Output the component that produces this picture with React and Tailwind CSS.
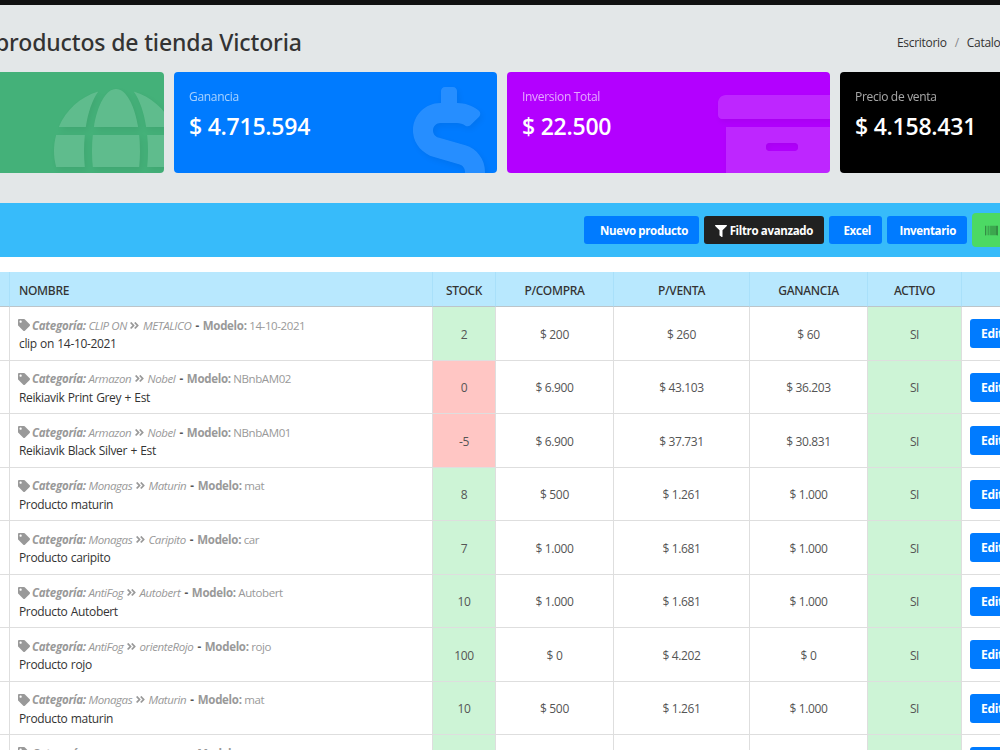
import React from "react";
import {
  FaAngleDoubleRight,
  FaArchive,
  FaBarcode,
  FaDollarSign,
  FaFilter,
  FaGlobe,
  FaTag,
} from "react-icons/fa";

const products = [
  { category: "CLIP ON", sub: "METALICO", model: "14-10-2021", name: "clip on 14-10-2021", stock: 2, cost: "200", price: "260", profit: "60" },
  { category: "Armazon", sub: "Nobel", model: "NBnbAM02", name: "Reikiavik Print Grey + Est", stock: 0, cost: "6.900", price: "43.103", profit: "36.203" },
  { category: "Armazon", sub: "Nobel", model: "NBnbAM01", name: "Reikiavik Black Silver + Est", stock: -5, cost: "6.900", price: "37.731", profit: "30.831" },
  { category: "Monagas", sub: "Maturin", model: "mat", name: "Producto maturin", stock: 8, cost: "500", price: "1.261", profit: "1.000" },
  { category: "Monagas", sub: "Caripito", model: "car", name: "Producto caripito", stock: 7, cost: "1.000", price: "1.681", profit: "1.000" },
  { category: "AntiFog", sub: "Autobert", model: "Autobert", name: "Producto Autobert", stock: 10, cost: "1.000", price: "1.681", profit: "1.000" },
  { category: "AntiFog", sub: "orienteRojo", model: "rojo", name: "Producto rojo", stock: 100, cost: "0", price: "4.202", profit: "0" },
  { category: "Monagas", sub: "Maturin", model: "mat", name: "Producto maturin", stock: 10, cost: "500", price: "1.261", profit: "1.000" },
  { category: "Monagas", sub: "Caripito", model: "car", name: "Producto caripito", stock: 10, cost: "1.000", price: "1.681", profit: "1.000" },
];

const StatCard = ({ color, label, value, icon: Icon }) => (
  <div className={`relative h-[101px] w-[323px] shrink-0 overflow-hidden rounded ${color} px-[15px] pt-[17px] text-white`}>
    <div className="h-4 text-[12px] leading-4 tracking-[-0.3px] opacity-65">{label}</div>
    <div className="mt-[5px] h-8 text-[23px] font-semibold leading-8 tracking-[-0.25px]">{value}</div>
    {Icon && (
      <div className="absolute -right-4 top-[15px] flex w-32 justify-center">
        <Icon className="h-32 w-auto text-white opacity-15 drop-shadow-[2px_3px_3px_rgba(0,0,0,0.4)]" />
      </div>
    )}
  </div>
);

const ToolbarButton = ({ className, children }) => (
  <button className={`flex h-7 shrink-0 items-center justify-end gap-[3px] whitespace-nowrap rounded-[3px] pr-[11px] pt-px text-[11.5px] font-bold tracking-[-0.35px] text-white ${className}`}>
    {children}
  </button>
);

const cell = "border-b border-r border-[#dedede] text-center text-[12px] tracking-[-0.35px] text-[#555] align-middle p-0 pt-[3px]";

const ProductRow = ({ product }) => (
  <tr className="h-[53.5px]">
    <td className={cell} />
    <td className="border-b border-r border-[#dedede] p-0 pl-2 pt-[3px] align-middle">
      <div className="flex h-[18px] items-center whitespace-pre text-[11.5px] tracking-[-0.4px] text-[#999]">
        <FaTag className="mr-0.5 size-[12px]" />
        <b className="italic tracking-[-0.25px]">Categoría:</b>
        <i> {product.category} </i>
        <FaAngleDoubleRight className="size-[11px]" />
        <i> {product.sub}</i>
        <b className="mx-[1.5px] text-[#555]"> - </b>
        <b className="tracking-[-0.3px]">Modelo:</b>
        <span> {product.model}</span>
      </div>
      <div className="h-[19px] pl-px pt-px text-[12px] leading-[18px] tracking-[-0.35px] [word-spacing:0.6px] text-[#333]">{product.name}</div>
    </td>
    <td className={`${cell} ${product.stock > 0 ? "bg-[#cdf4d6]" : "bg-[#ffc6c4]"}`}>{product.stock}</td>
    <td className={cell}>$ {product.cost}</td>
    <td className={cell}>$ {product.price}</td>
    <td className={cell}>$ {product.profit}</td>
    <td className={`${cell} bg-[#cdf4d6]`}>SI</td>
    <td className="border-b border-[#dedede] p-0 pl-2 pt-px align-middle">
      <button className="flex h-[29px] w-[60px] items-center rounded-[3px] bg-[#007bff] pl-[11px] pt-px text-[12px] font-bold tracking-[-0.3px] text-white">
        Editar
      </button>
    </td>
  </tr>
);

const App = () => {
  const th = "border-b border-r border-b-[#bcc5ca] border-r-[#a9e0fa] p-0 pt-[3px] text-center font-['Noto_Sans'] text-[12px] font-medium tracking-[-0.3px] text-[#333]";

  return (
    <div className="h-[750px] w-[1000px] overflow-hidden bg-white font-['Open_Sans','Noto_Sans',sans-serif]">
      <div className="h-[5px] bg-[#111]" />
      <header className="h-[198px] bg-[#e3e7e8] pt-[18px]">
        <div className="flex h-10 items-center justify-between">
          <h1 className="-ml-[5px] -mt-px whitespace-nowrap font-['Noto_Sans'] text-[23px] font-medium tracking-[-0.14px] text-[#333]">
            productos de tienda Victoria
          </h1>
          <nav className="-mt-px flex w-[103px] gap-2 overflow-hidden whitespace-nowrap text-[12px] tracking-[-0.3px] text-[#333]">
            <span>Escritorio</span>
            <span className="text-[#888]">/</span>
            <span>Catalogo</span>
          </nav>
        </div>
        <div className="-ml-[159px] mt-[9px] flex w-[1400px] gap-2.5">
          <StatCard color="bg-[#44b179]" label="" value="" icon={FaGlobe} />
          <StatCard color="bg-[#007bff]" label="Ganancia" value="$ 4.715.594" icon={FaDollarSign} />
          <StatCard color="bg-[#b300ff]" label="Inversion Total" value="$ 22.500" icon={FaArchive} />
          <StatCard color="bg-black" label="Precio de venta" value="$ 4.158.431" />
        </div>
      </header>

      <div className="flex h-[54px] items-center gap-[5px] bg-[#37bbfa] pl-[584px]">
        <ToolbarButton className="w-[115px] bg-[#007bff]">Nuevo producto</ToolbarButton>
        <ToolbarButton className="w-[120px] bg-[#212121]">
          <FaFilter className="size-[12px]" />
          Filtro avanzado
        </ToolbarButton>
        <ToolbarButton className="w-[53px] bg-[#007bff]">Excel</ToolbarButton>
        <ToolbarButton className="w-20 bg-[#007bff]">Inventario</ToolbarButton>
        <button className="flex h-[34px] w-12 shrink-0 items-center rounded bg-[#4cd964] pl-[13px] text-[#2a6d36]">
          <FaBarcode className="size-[13px]" />
        </button>
      </div>

      <table className="mt-[15px] w-[1050px] table-fixed border-separate border-spacing-0">
        <colgroup>
          <col className="w-[10px]" />
          <col className="w-[423px]" />
          <col className="w-[63px]" />
          <col className="w-[118px]" />
          <col className="w-[136px]" />
          <col className="w-[118px]" />
          <col className="w-[94px]" />
          <col className="w-[88px]" />
        </colgroup>
        <thead>
          <tr className="h-[35px] bg-[#b8e8fe]">
            <th className={th} />
            <th className={`${th} pl-[9px] text-left`}>NOMBRE</th>
            <th className={th}>STOCK</th>
            <th className={th}>P/COMPRA</th>
            <th className={th}>P/VENTA</th>
            <th className={th}>GANANCIA</th>
            <th className={th}>ACTIVO</th>
            <th className={th} />
          </tr>
        </thead>
        <tbody>
          {products.map((product, index) => (
            <ProductRow key={index} product={product} />
          ))}
        </tbody>
      </table>
    </div>
  );
};

export default App;
